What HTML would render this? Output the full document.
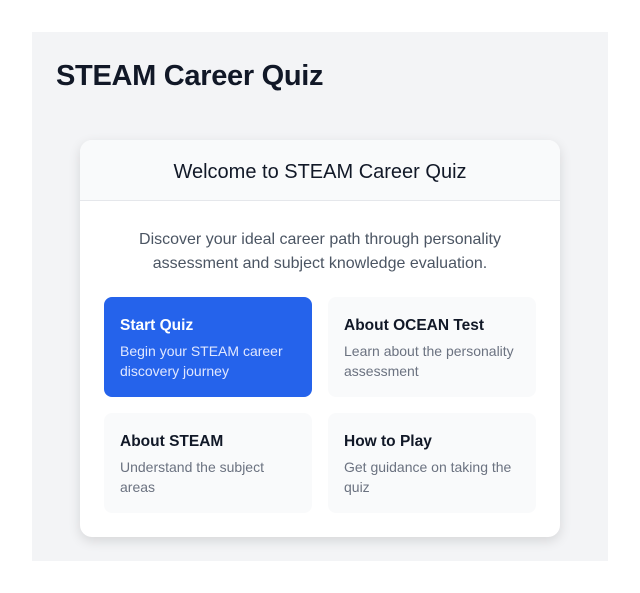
<!DOCTYPE html>
<html><head><meta charset="utf-8"><style>
*{box-sizing:border-box;margin:0;padding:0}
body{width:640px;height:593px;background:#fff;font-family:"Liberation Sans",sans-serif;position:relative;overflow:hidden}
.panel{position:absolute;left:32px;top:32px;width:576px;height:529px;background:#f3f4f6}
h1{position:absolute;left:56px;top:57px;font-size:29px;font-weight:700;color:#111827;line-height:38px;letter-spacing:-0.3px}
.card{position:absolute;left:80px;top:140px;width:480px;height:397px;background:#fff;border-radius:12px;box-shadow:0 4px 12px rgba(0,0,0,.12);overflow:hidden}
.hd{height:61px;background:#f9fafb;border-bottom:1px solid #e5e7eb;text-align:center;font-size:20px;line-height:64px;color:#111827}
.p{position:absolute;top:88px;left:0;width:480px;text-align:center;font-size:16px;line-height:24px;color:#4b5563}
.b{position:absolute;width:208px;height:100px;border-radius:8px;background:#f9fafb;padding:19px 16px}
.b h3{font-size:15.5px;font-weight:700;color:#111827;line-height:20px;margin-bottom:5px}
.b p{font-size:14px;color:#6b7280;line-height:20px}
.b.a{background:#2563eb}.b.a h3{color:#fff}.b.a p{color:#e0e7ff}
</style></head><body>
<div class="panel"></div>
<h1>STEAM Career Quiz</h1>
<div class="card">
<div class="hd">Welcome to STEAM Career Quiz</div>
<div class="p">Discover your ideal career path through personality<br>assessment and subject knowledge evaluation.</div>
<div class="b a" style="left:24px;top:157px"><h3>Start Quiz</h3><p>Begin your STEAM career discovery journey</p></div>
<div class="b" style="left:248px;top:157px"><h3>About OCEAN Test</h3><p>Learn about the personality assessment</p></div>
<div class="b" style="left:24px;top:273px"><h3>About STEAM</h3><p>Understand the subject areas</p></div>
<div class="b" style="left:248px;top:273px"><h3>How to Play</h3><p>Get guidance on taking the quiz</p></div>
</div>
</body></html>
